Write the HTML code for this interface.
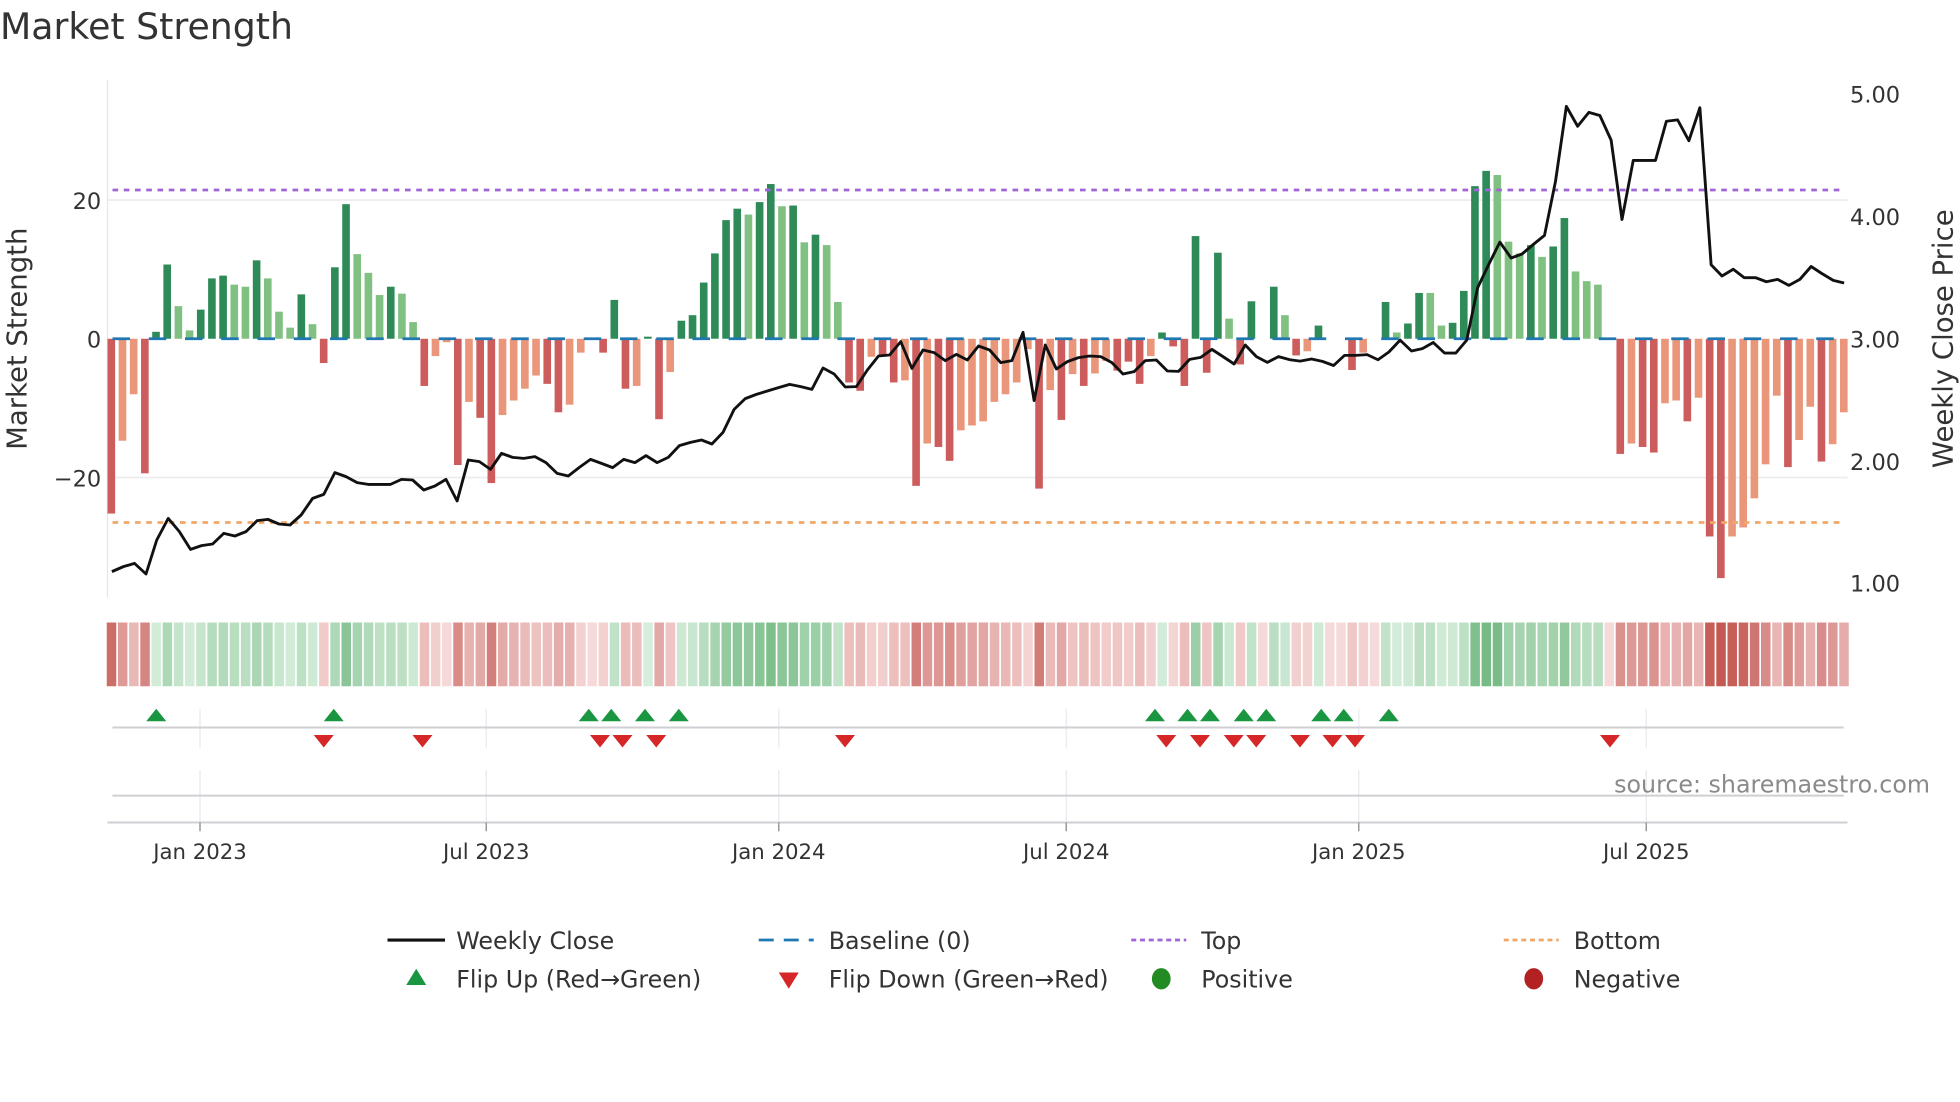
<!DOCTYPE html>
<html><head><meta charset="utf-8"><style>
html,body{margin:0;padding:0;background:#fff;overflow:hidden}
svg{display:block}
text{font-family:"DejaVu Sans","Liberation Sans",sans-serif;fill:#333}
</style></head><body>
<svg id="s" xmlns="http://www.w3.org/2000/svg" width="1960" height="1102" viewBox="0 0 1568 881.6">
<rect width="1568" height="882" fill="#fff"/>
<text x="0" y="31" font-size="29">Market Strength</text>
<line x1="86" y1="64" x2="86" y2="478" stroke="#e6e6e6" stroke-width="1"/>
<line x1="86" y1="160" x2="1478" y2="160" stroke="#ececec" stroke-width="1.3"/>
<line x1="86" y1="382" x2="1478" y2="382" stroke="#ececec" stroke-width="1.3"/>
<g id="bars"></g>
<line x1="90" y1="271" x2="1475" y2="271" stroke="#1f77b4" stroke-width="2.2" stroke-dasharray="14 15"/>
<line x1="90" y1="152" x2="1475" y2="152" stroke="#a066d8" stroke-width="2.2" stroke-dasharray="4.5 4.5"/>
<line x1="90" y1="418" x2="1475" y2="418" stroke="#f0a868" stroke-width="2.2" stroke-dasharray="4.5 4.5"/>
<polyline id="ln" fill="none" stroke="#111" stroke-width="2.3" stroke-linejoin="round"/>
<g font-size="18" text-anchor="end">
<text x="81" y="167">20</text><text x="81" y="278">0</text><text x="81" y="389">−20</text>
</g>
<g font-size="18">
<text x="1480" y="82">5.00</text><text x="1480" y="180">4.00</text><text x="1480" y="278">3.00</text><text x="1480" y="376">2.00</text><text x="1480" y="473">1.00</text>
</g>
<text transform="translate(21,271) rotate(-90)" font-size="22" text-anchor="middle">Market Strength</text>
<text transform="translate(1562,271) rotate(-90)" font-size="22" text-anchor="middle">Weekly Close Price</text>
<g id="heat"></g>
<g stroke="#e8e8ee" stroke-width="1">
<line x1="160" y1="567" x2="160" y2="598"/><line x1="389" y1="567" x2="389" y2="598"/><line x1="623" y1="567" x2="623" y2="598"/><line x1="853" y1="567" x2="853" y2="598"/><line x1="1087" y1="567" x2="1087" y2="598"/><line x1="1317" y1="567" x2="1317" y2="598"/>
<line x1="160" y1="616" x2="160" y2="658"/><line x1="389" y1="616" x2="389" y2="658"/><line x1="623" y1="616" x2="623" y2="658"/><line x1="853" y1="616" x2="853" y2="658"/><line x1="1087" y1="616" x2="1087" y2="658"/><line x1="1317" y1="616" x2="1317" y2="658"/>
</g>
<line x1="90" y1="582" x2="1475" y2="582" stroke="#cfcfd4" stroke-width="1.6"/>
<line x1="90" y1="636.5" x2="1475" y2="636.5" stroke="#cfcfd4" stroke-width="1.6"/>
<line x1="86" y1="658" x2="1478" y2="658" stroke="#cfcfd4" stroke-width="1.6"/>
<g id="tri"></g>
<g stroke="#999" stroke-width="1.2">
<line x1="160" y1="658" x2="160" y2="665"/><line x1="389" y1="658" x2="389" y2="665"/><line x1="623" y1="658" x2="623" y2="665"/><line x1="853" y1="658" x2="853" y2="665"/><line x1="1087" y1="658" x2="1087" y2="665"/><line x1="1317" y1="658" x2="1317" y2="665"/>
</g>
<g font-size="17" text-anchor="middle">
<text x="160" y="687">Jan 2023</text><text x="389" y="687">Jul 2023</text><text x="623" y="687">Jan 2024</text><text x="853" y="687">Jul 2024</text><text x="1087" y="687">Jan 2025</text><text x="1317" y="687">Jul 2025</text>
</g>
<text x="1544" y="634" font-size="19" text-anchor="end" style="fill:#8a8a8a">source: sharemaestro.com</text>
<g font-size="19">
<line x1="310" y1="752" x2="356" y2="752" stroke="#111" stroke-width="2.5"/>
<text x="365" y="759">Weekly Close</text>
<line x1="607" y1="752" x2="651" y2="752" stroke="#1f77b4" stroke-width="2.2" stroke-dasharray="12 8"/>
<text x="663" y="759">Baseline (0)</text>
<line x1="905" y1="752" x2="949" y2="752" stroke="#a066d8" stroke-width="2.2" stroke-dasharray="4 3"/>
<text x="961" y="759">Top</text>
<line x1="1203" y1="752" x2="1247" y2="752" stroke="#f0a868" stroke-width="2.2" stroke-dasharray="4 3"/>
<text x="1259" y="759">Bottom</text>
<polygon points="325,788 341,788 333,775" fill="#1a9641"/>
<text x="365" y="790">Flip Up (Red→Green)</text>
<polygon points="623,778 639,778 631,791" fill="#d62728"/>
<text x="663" y="790">Flip Down (Green→Red)</text>
<ellipse cx="929" cy="783" rx="7.5" ry="8.5" fill="#228b22"/>
<text x="961" y="790">Positive</text>
<ellipse cx="1227" cy="783" rx="7.5" ry="8.5" fill="#b22222"/>
<text x="1259" y="790">Negative</text>
</g>
</svg>
<script>
var V=[[-25.2,1],[-14.7,0],[-8,0],[-19.4,1],[1,1],[10.7,1],[4.7,0],[1.2,0],[4.2,1],[8.7,1],[9.1,1],[7.8,0],[7.5,0],[11.3,1],[8.7,0],[3.9,0],[1.6,0],[6.4,1],[2.1,0],[-3.5,1],[10.3,1],[19.4,1],[12.2,0],[9.5,0],[6.3,0],[7.5,1],[6.5,0],[2.4,0],[-6.8,1],[-2.5,0],[-0.5,0],[-18.2,1],[-9.1,0],[-11.4,1],[-20.8,1],[-11,0],[-8.9,0],[-7.2,0],[-5.3,0],[-6.5,1],[-10.6,1],[-9.5,0],[-2,0],[0,0],[-2,1],[5.6,1],[-7.2,1],[-6.8,0],[0.3,1],[-11.6,1],[-4.8,0],[2.6,1],[3.4,1],[8.1,1],[12.3,1],[17.1,1],[18.75,1],[17.9,0],[19.7,1],[22.3,1],[19.1,0],[19.2,1],[13.9,0],[15,1],[13.5,0],[5.3,0],[-6.3,1],[-7.5,1],[-2.6,0],[-2.5,1],[-6.3,1],[-6,0],[-21.2,1],[-15.1,0],[-15.6,1],[-17.6,1],[-13.2,0],[-12.5,0],[-11.9,0],[-9.1,0],[-8,0],[-6.3,0],[-1.5,0],[-21.6,1],[-7.4,0],[-11.7,1],[-5.1,0],[-6.8,1],[-5,0],[-3.2,0],[-4.6,1],[-3.3,1],[-6.5,1],[-2.5,0],[0.9,1],[-1.1,1],[-6.8,1],[14.8,1],[-4.9,1],[12.4,1],[2.9,0],[-3.7,1],[5.4,1],[0,0],[7.5,1],[3.4,0],[-2.4,1],[-1.8,0],[1.9,1],[0,0],[0,0],[-4.5,1],[-2,0],[0,0],[5.3,1],[0.9,0],[2.2,1],[6.6,1],[6.6,0],[1.9,0],[2.3,1],[6.9,1],[22,1],[24.2,1],[23.6,0],[14,0],[12.3,0],[13.5,1],[11.8,0],[13.3,1],[17.4,1],[9.7,0],[8.3,0],[7.8,0],[0,0],[-16.6,1],[-15.1,0],[-15.6,1],[-16.4,1],[-9.3,0],[-8.9,0],[-11.9,1],[-8.5,0],[-28.5,1],[-34.5,1],[-28.5,0],[-27.2,0],[-23,0],[-18.1,0],[-8.2,0],[-18.5,1],[-14.6,0],[-9.8,0],[-17.7,1],[-15.2,0],[-10.6,0]];
var NS="http://www.w3.org/2000/svg";
function el(p,t,a){var e=document.createElementNS(NS,t);for(var k in a)e.setAttribute(k,a[k]);p.appendChild(e);return e;}
var bars=document.getElementById('bars'),heat=document.getElementById('heat');
var S=(1475-89)/155;
function mix(a,b,t){return 'rgb('+a.map(function(v,i){return Math.round(v+(b[i]-v)*t)}).join(',')+')';}
for(var i=0;i<V.length;i++){
 var v=V[i][0],d=V[i][1],x=89+S*i;
 if(v!==0){var col=v>0?(d?'#2e8b57':'#80c080'):(d?'#cd5c5c':'#e9967a');
  var y1=271-v*5.55;el(bars,'rect',{x:x-3,y:Math.min(271,y1),width:6.1,height:Math.abs(v*5.55),fill:col});}
 var t=Math.min(Math.abs(v)/30,1);
 var c=v>0?mix([215,238,220],[95,175,112],t):mix([246,218,218],[196,88,82],t);
 el(heat,'rect',{x:x-3.6,y:498,width:7.6,height:51,fill:c});
}
var Z3=[[18,1205],[48,1190],[77,1180],[107,1212],[135,1110],[165,1045],[194,1085],[223,1138],[252,1127],[281,1122],[310,1090],[339,1098],[368,1085],[397,1052],[425,1048],[454,1062],[483,1065],[512,1035],[542,985],[571,973],[600,908],[629,920],[658,938],[687,943],[716,943],[745,943],[774,928],[803,930],[832,960],[861,948],[890,928],[919,993],[948,870],[977,875],[1006,898],[1035,850],[1064,862],[1093,865],[1122,860],[1151,878],[1180,910],[1209,918],[1238,892],[1267,868],[1296,880],[1325,893],[1354,868],[1383,878],[1412,857],[1441,878],[1470,862],[1499,827],[1528,817],[1557,810]];
var Z4=[[31,822],[60,787],[89,718],[118,686],[147,673],[176,663],[205,653],[234,643],[263,650],[292,658],[321,594],[350,612],[379,651],[408,650],[437,600],[466,558],[495,555],[524,515],[553,595],[582,540],[611,548],[640,572],[669,553],[698,570],[727,528],[756,540],[785,578],[814,572],[843,487],[872,692],[901,525],[930,597],[959,575],[988,563],[1017,558],[1046,560],[1075,578],[1104,612],[1133,605],[1162,572],[1191,570],[1220,603],[1249,604],[1278,568],[1307,562],[1336,538],[1365,560],[1394,582],[1423,525],[1452,560],[1481,577],[1510,560]];
var Z5=[[0,828],[28,832],[59,826],[89,833],[120,845],[150,815],[181,815],[212,813],[242,828],[272,805],[303,770],[334,802],[364,795],[394,777],[425,808],[456,808],[486,770],[516,615],[547,545],[577,480],[608,527],[638,515],[669,487],[700,460],[730,300],[760,78],[791,137],[822,96],[852,105],[883,178],[913,413],[944,238],[974,238],[1005,238],[1035,122],[1066,118],[1097,180],[1127,82],[1158,547],[1188,580],[1219,560],[1249,585],[1280,585],[1310,597],[1341,590],[1372,608],[1402,590],[1433,552],[1463,573],[1494,593],[1524,601]];
var pts=[];
Z3.forEach(function(p){pts.push((84+p[0]/3.2625).toFixed(1)+','+(136+p[1]/3.75).toFixed(1));});
Z4.forEach(function(p){pts.push((560+p[0]/3.2625).toFixed(1)+','+(136+p[1]/3.75).toFixed(1));});
Z5.forEach(function(p){pts.push((1032+p[0]/3.4375).toFixed(1)+','+(64+p[1]/3.7).toFixed(1));});
document.getElementById('ln').setAttribute('points',pts.join(' '));
var tri=document.getElementById('tri');
[125,267,471,489,516,543,924,950,968,995,1013,1057,1075,1111].forEach(function(x){el(tri,'polygon',{points:(x-8)+',577 '+(x+8)+',577 '+x+',567',fill:'#1a9641'});});
[259,338,480,498,525,676,933,960,987,1005,1040,1066,1084,1288].forEach(function(x){el(tri,'polygon',{points:(x-8)+',588 '+(x+8)+',588 '+x+',598',fill:'#d62728'});});
</script>
</body></html>
